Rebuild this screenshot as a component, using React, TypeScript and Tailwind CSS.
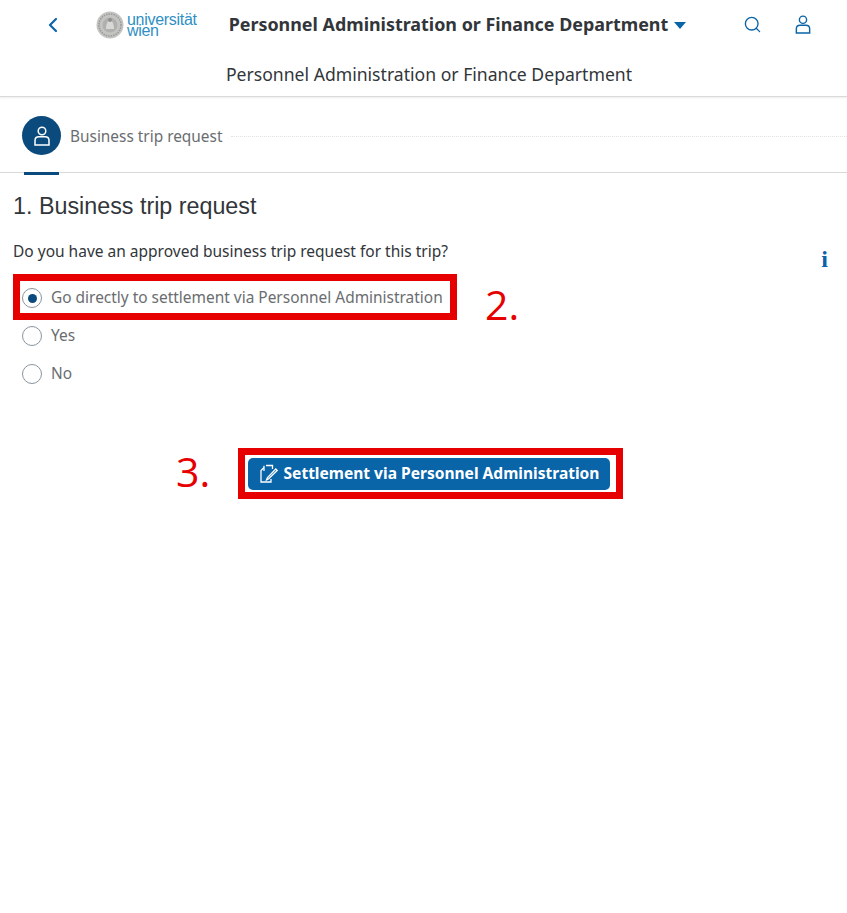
import { ChevronLeft, Search } from "lucide-react";

const sans = "font-['Noto_Sans','Open_Sans',sans-serif]";

function UserIcon({ className }: { className: string }) {
  return (
    <svg viewBox="0 0 16 20" fill="none" stroke="currentColor" strokeWidth="1.5" className={className}>
      <circle cx="8" cy="5" r="3.8" />
      <path d="M1 19v-4.5C1 12 3 10.8 5 10.8h6c2 0 4 1.2 4 3.7V19z" />
    </svg>
  );
}

function Logo() {
  return (
    <div className="flex items-center gap-[3px]">
      <svg viewBox="0 0 28 28" className="h-[28px] w-[28px]">
        <circle cx="14" cy="14" r="13.5" fill="#c4c4c2" />
        <circle cx="14" cy="14" r="11" fill="none" stroke="#9b9b99" strokeWidth="1.6" strokeDasharray="1.5 1" />
        <circle cx="14" cy="14" r="7.5" fill="#b0b0ae" />
        <path d="M10 18c0-5 2-9 4-9s4 4 4 9z" fill="#d8d8d6" />
        <circle cx="14" cy="9" r="2" fill="#8f8f8d" />
      </svg>
      <div className="flex flex-col font-['Liberation_Sans',sans-serif] text-[16px] leading-[12px] tracking-[-0.3px] text-[#2f8fc4]">
        <span>universität</span>
        <span className="-mt-px">wien</span>
      </div>
    </div>
  );
}

function Radio({ label, checked }: { label: string; checked?: boolean }) {
  return (
    <div className="flex h-[38px] items-center">
      <div className="ml-[22px] flex h-[20px] w-[20px] items-center justify-center rounded-full border border-[#8a949e] bg-white">
        {checked && <div className="h-[9px] w-[9px] rounded-full bg-[#0a4a7c]" />}
      </div>
      <span className="ml-[9px] text-[15.45px] text-[#6a6d70]">{label}</span>
    </div>
  );
}

export default function App() {
  return (
    <div className={`relative min-h-[913px] bg-white text-[#32363a] ${sans}`}>
      <header className="h-[97px] border-b border-[#d9d9d9] shadow-[0_1px_2px_rgba(0,0,0,0.08)]">
        <div className="flex h-[50px] items-center">
          <ChevronLeft className="ml-[41px] h-[24px] w-[24px] text-[#0a64a8]" strokeWidth={2.2} />
          <div className="ml-[31px]">
            <Logo />
          </div>
          <span className="ml-[32px] -mt-[2px] text-[17.9px] font-bold whitespace-nowrap">
            Personnel Administration or Finance Department
          </span>
          <div className="ml-[6px] h-0 w-0 border-x-[6px] border-t-[7px] border-x-transparent border-t-[#0a64a8]" />
          <Search className="ml-[57px] -mt-[2px] h-[19px] w-[19px] text-[#0a64a8]" strokeWidth={1.7} />
          <UserIcon className="ml-[33px] -mt-[2px] h-[19px] w-[16px] text-[#0a64a8]" />
        </div>
        <div className="flex h-[46px] items-center justify-center pl-[11px] pt-[2px] text-[17.6px]">
          Personnel Administration or Finance Department
        </div>
      </header>

      <nav className="relative flex h-[76px] items-center border-b border-[#d9d9d9] pl-[22px] pt-[2px]">
        <div className="flex h-[39px] w-[39px] items-center justify-center rounded-full bg-[#0a4a7c]">
          <UserIcon className="h-[20px] w-[16px] text-white" />
        </div>
        <span className="ml-[9px] pt-[3px] text-[15.4px] whitespace-nowrap text-[#6a6d70]">Business trip request</span>
        <div className="ml-[9px] mt-[1px] flex-1 border-t border-dotted border-[#e2e2e2]" />
        <div className="absolute bottom-[-3px] left-[24px] h-[3px] w-[35px] bg-[#0a4a7c]" />
      </nav>

      <main className="px-[13px]">
        <h1 className="mt-[17px] font-['Liberation_Sans',sans-serif] text-[23.3px] leading-[32px]">1. Business trip request</h1>
        <div className="mt-[10px] flex items-center justify-between">
          <p className="text-[15.5px] leading-[22px]">Do you have an approved business trip request for this trip?</p>
          <span className="mr-[6px] mt-[16px] font-['Liberation_Serif',serif] text-[24px] font-bold leading-[22px] text-[#0a64a8]">i</span>
        </div>
      </main>

      <div className="mt-[9px]">
        <Radio label="Go directly to settlement via Personnel Administration" checked />
        <Radio label="Yes" />
        <Radio label="No" />
      </div>

      <div className="ml-[248px] mt-[65px] flex h-[32px] w-[362px] items-center justify-center gap-[5px] rounded-[5px] bg-[#0a64a8] text-[15.55px] font-bold whitespace-nowrap text-white">
        <svg viewBox="0 0 20 20" fill="none" stroke="currentColor" strokeWidth="1.3" className="h-[20px] w-[20px]">
          <path d="M7 1.5h6.5V5M5 7V1.8M5 3.5L2 6.5v11.5h10v-3" />
          <path d="M9.5 15l-2 1 .8-2.2 8.5-8.8 1.4 1.4z" />
        </svg>
        Settlement via Personnel Administration
      </div>

      <div className="absolute left-[13px] top-[274px] h-[46px] w-[444px] border-[7px] border-[#e60000]" />
      <span className="absolute left-[485px] top-[278px] font-['Open_Sans',sans-serif] text-[41px] leading-[52px] text-[#e60000]">2.</span>
      <div className="absolute left-[238px] top-[448px] h-[51px] w-[385px] border-[7px] border-[#e60000]" />
      <span className="absolute left-[176px] top-[445px] font-['Open_Sans',sans-serif] text-[41px] leading-[52px] text-[#e60000]">3.</span>
    </div>
  );
}
